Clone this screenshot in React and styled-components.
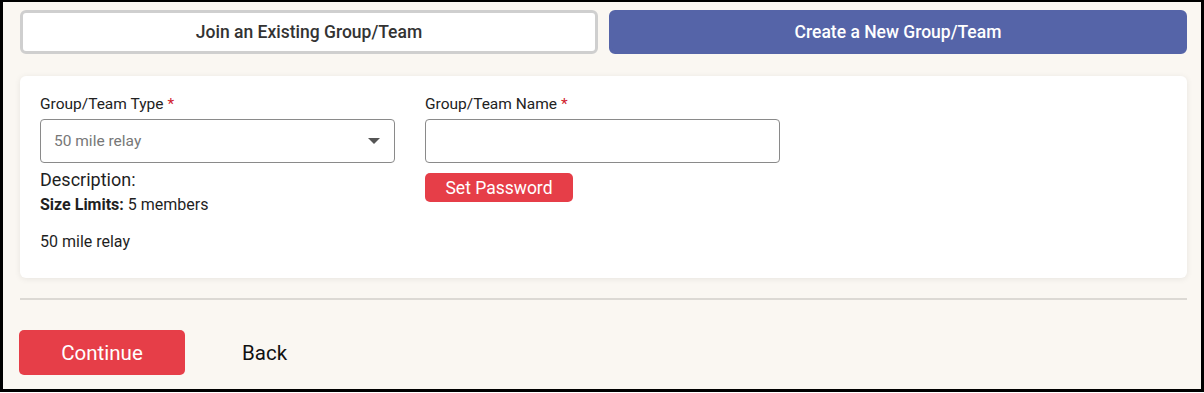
import styled, { createGlobalStyle } from 'styled-components'

const colors = {
    page: '#faf7f2',
    red: '#e63e48',
    blue: '#5564a8',
    text: '#1f1f1f',
    border: '#8a8a8a',
}

const GlobalStyle = createGlobalStyle`
    * { box-sizing: border-box; }
    body {
        margin: 0;
        font-family: Roboto, "Liberation Sans", Arial, sans-serif;
        color: ${colors.text};
    }
`

const Frame = styled.div`
    width: 1204px;
    height: 392px;
    border: 3px solid #000;
    border-top-width: 2px;
    background-color: ${colors.page};
    padding: 8px 14px 0 16px;
    display: flex;
    flex-direction: column;
`
const Tabs = styled.div`
    display: grid;
    grid-template-columns: 1fr 1fr;
    gap: 11px;
    padding-left: 1px;
`
const Tab = styled.button`
    height: 44px;
    border-radius: 6px;
    font-family: inherit;
    font-size: 17.5px;
    font-weight: 500;
    cursor: pointer;
    border: 3px solid ${({ $active }) => ($active ? colors.blue : '#cfcfcf')};
    background-color: ${({ $active }) => ($active ? colors.blue : '#fff')};
    color: ${({ $active }) => ($active ? '#fff' : '#333')};
`
const Card = styled.div`
    margin-top: 22px;
    margin-left: 1px;
    height: 202px;
    background-color: #fff;
    border-radius: 6px;
    box-shadow: 0 1px 6px rgba(0, 0, 0, 0.08);
    padding: 19px 20px;
    display: flex;
    gap: 30px;
`
const Column = styled.div`
    width: 355px;
    display: flex;
    flex-direction: column;
`
const Label = styled.label`
    font-size: 15.5px;
    line-height: 18px;
    margin-bottom: 6px;
    color: #222;

    span {
        color: #d0202e;
        margin-left: 4px;
    }
`
const SelectBox = styled.div`
    height: 44px;
    border: 1px solid ${colors.border};
    border-radius: 4px;
    display: flex;
    align-items: center;
    justify-content: space-between;
    padding: 0 14px 0 13px;
    font-size: 15.5px;
    color: #777;
`
const Caret = styled.span`
    width: 0;
    height: 0;
    border-left: 6px solid transparent;
    border-right: 6px solid transparent;
    border-top: 6px solid #555;
`
const Input = styled.input`
    height: 44px;
    border: 1px solid ${colors.border};
    border-radius: 4px;
    font-family: inherit;
    font-size: 15px;
    padding: 0 12px;
`
const Description = styled.div`
    margin-top: 6px;
    font-size: 18px;
    line-height: 21px;
`
const Info = styled.div`
    font-size: 16px;
    line-height: 19px;
    margin-top: ${({ $gap }) => $gap || 0}px;

    b { font-weight: 700; }
`
const SmallButton = styled.button`
    align-self: flex-start;
    margin-top: 10px;
    height: 29px;
    width: 148px;
    border: none;
    border-radius: 5px;
    background-color: ${colors.red};
    color: #fff;
    font-family: inherit;
    font-size: 17.5px;
    cursor: pointer;
`
const Divider = styled.hr`
    margin: 20px 0 0 1px;
    border: none;
    border-top: 2px solid #dcd9d4;
`
const Footer = styled.div`
    margin-top: 30px;
    display: flex;
    align-items: center;
    gap: 57px;
`
const PrimaryButton = styled.button`
    height: 45px;
    width: 166px;
    border: none;
    border-radius: 5px;
    background-color: ${colors.red};
    color: #fff;
    font-family: inherit;
    font-size: 20.5px;
    cursor: pointer;
`
const TextButton = styled.button`
    border: none;
    background: none;
    padding: 0;
    font-family: inherit;
    font-size: 20.5px;
    color: #111;
    cursor: pointer;
`

const App = () => {
    return (
        <Frame>
            <GlobalStyle />
            <Tabs>
                <Tab>Join an Existing Group/Team</Tab>
                <Tab $active>Create a New Group/Team</Tab>
            </Tabs>
            <Card>
                <Column>
                    <Label>Group/Team Type<span>*</span></Label>
                    <SelectBox>
                        50 mile relay
                        <Caret />
                    </SelectBox>
                    <Description>Description:</Description>
                    <Info $gap={5}><b>Size Limits:</b> 5 members</Info>
                    <Info $gap={18}>50 mile relay</Info>
                </Column>
                <Column>
                    <Label>Group/Team Name<span>*</span></Label>
                    <Input />
                    <SmallButton>Set Password</SmallButton>
                </Column>
            </Card>
            <Divider />
            <Footer>
                <PrimaryButton>Continue</PrimaryButton>
                <TextButton>Back</TextButton>
            </Footer>
        </Frame>
    )
}

export default App
